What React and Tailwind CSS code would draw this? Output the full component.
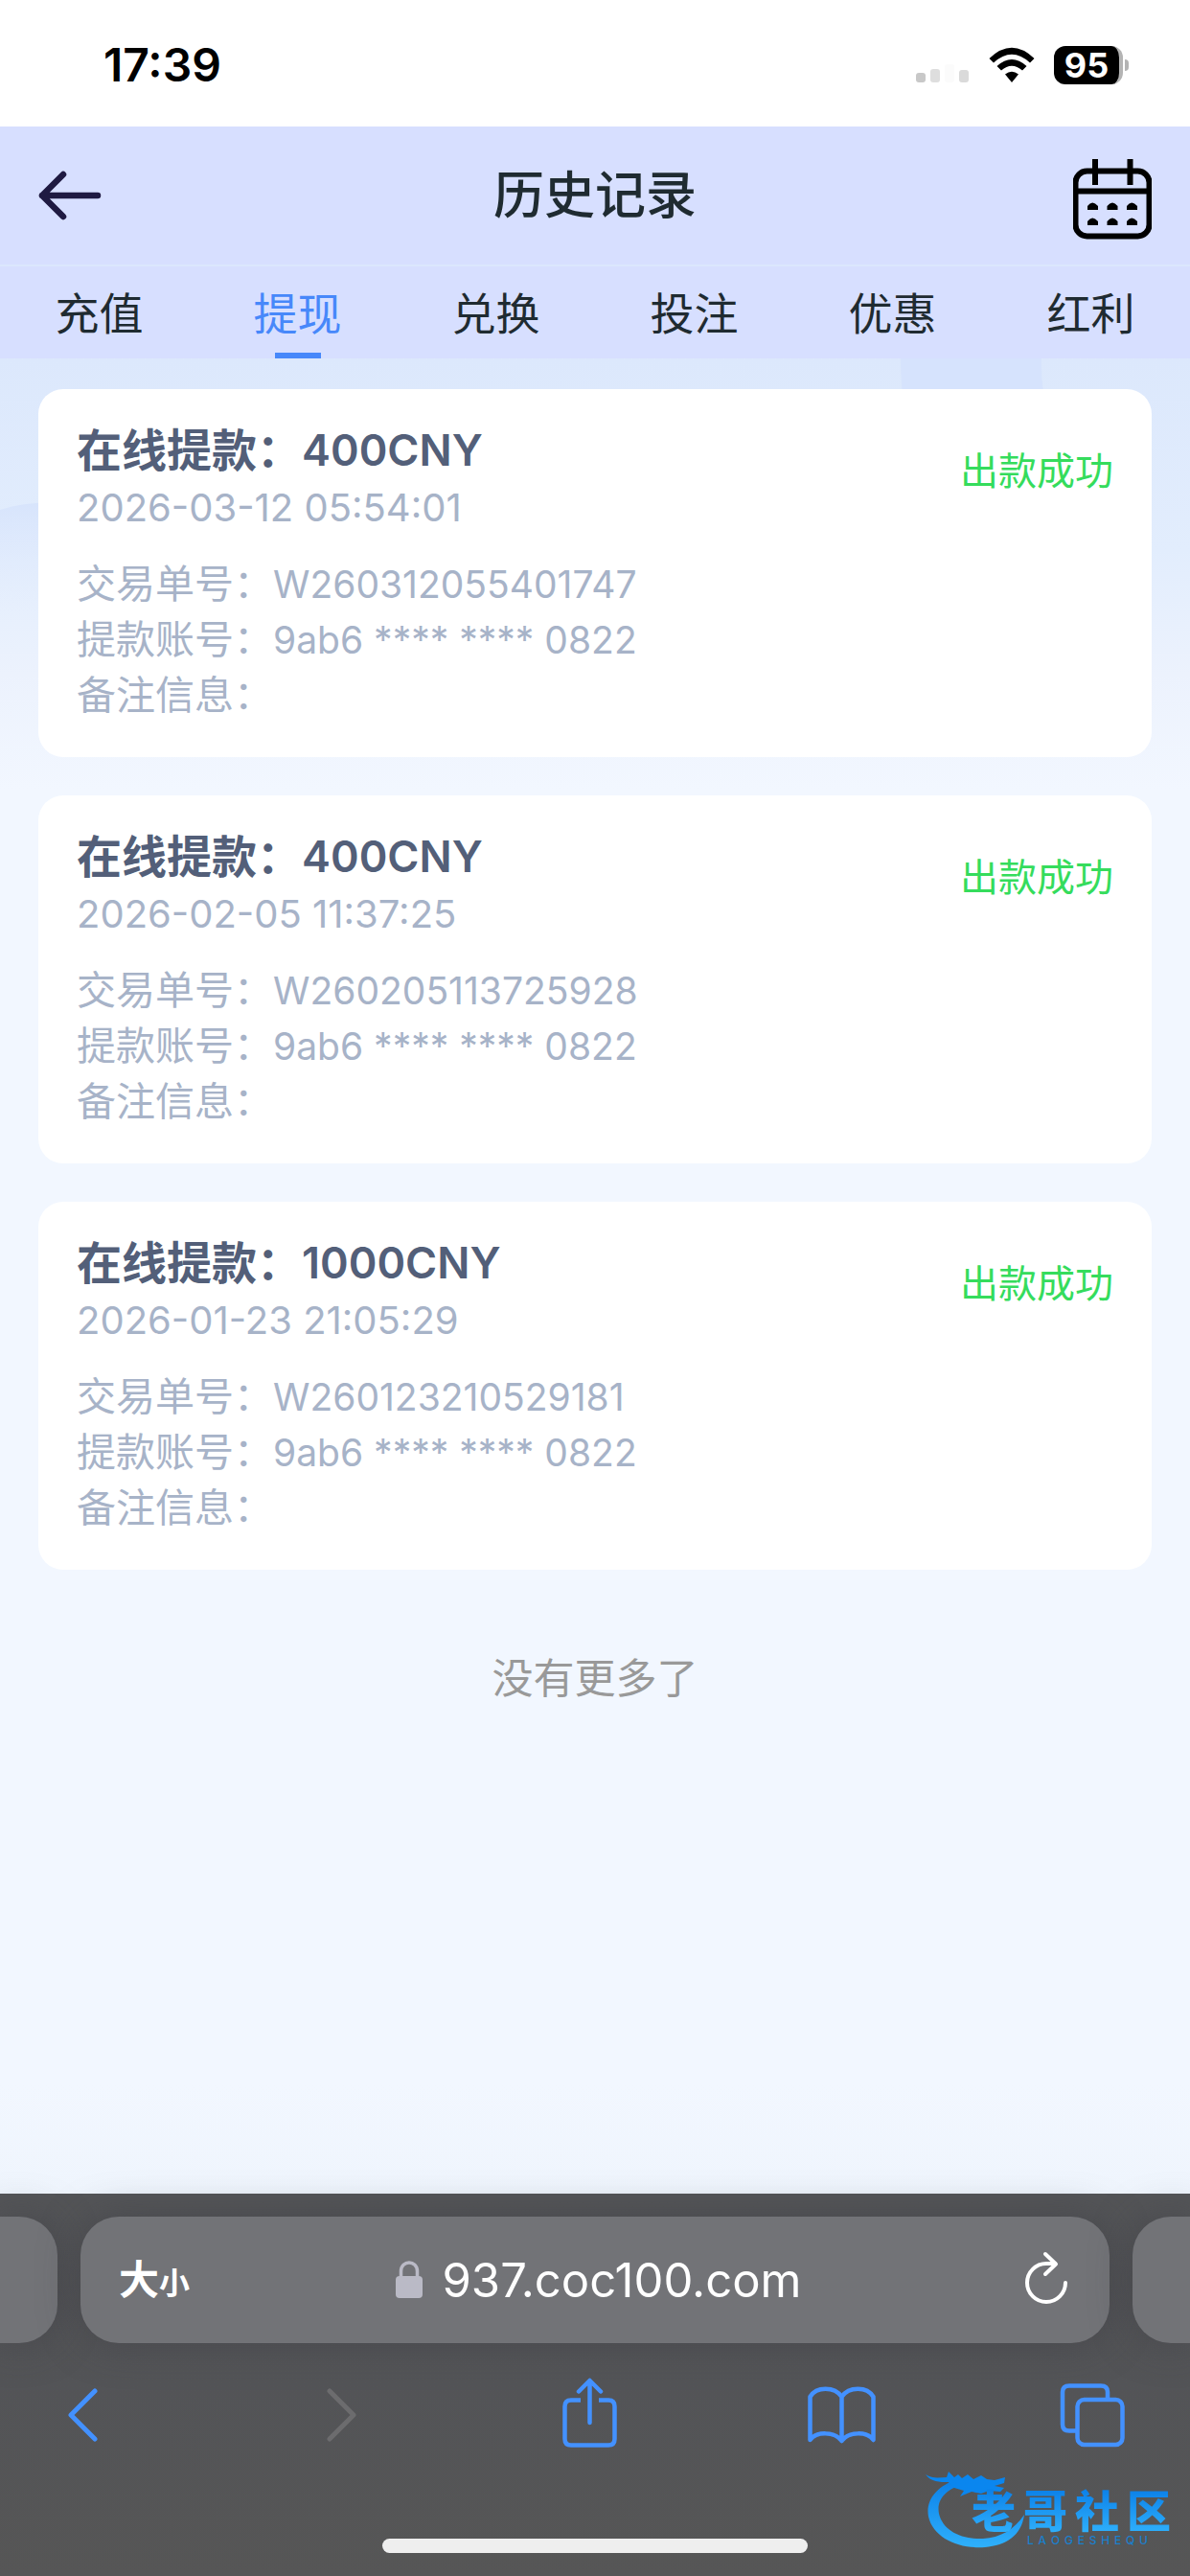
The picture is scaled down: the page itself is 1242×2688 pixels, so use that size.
import { useState } from "react";

const tabs = ["充值", "提现", "兑换", "投注", "优惠", "红利"];

const records = [
  {
    amount: "400CNY",
    time: "2026-03-12 05:54:01",
    order: "W260312055401747",
    account: "9ab6 **** **** 0822",
    remark: "",
    status: "出款成功",
  },
  {
    amount: "400CNY",
    time: "2026-02-05 11:37:25",
    order: "W260205113725928",
    account: "9ab6 **** **** 0822",
    remark: "",
    status: "出款成功",
  },
  {
    amount: "1000CNY",
    time: "2026-01-23 21:05:29",
    order: "W260123210529181",
    account: "9ab6 **** **** 0822",
    remark: "",
    status: "出款成功",
  },
];

function StatusBar() {
  return (
    <div className="flex h-33 items-center justify-between bg-white pr-16 pl-27 text-black">
      <span className="pt-1 text-[48px] leading-none font-semibold">17:39</span>
      <div className="flex items-center gap-5 pt-1">
        <svg width="56" height="40" viewBox="0 0 56 40">
          <rect x="0" y="28" width="10" height="10" rx="3" fill="#c8c8c8" />
          <rect x="15" y="24" width="10" height="14" rx="3" fill="#dedede" />
          <rect x="30" y="19" width="10" height="19" rx="3" fill="#fbfbfb" />
          <rect x="45" y="25" width="10" height="13" rx="3" fill="#dadada" />
        </svg>
        <svg width="48" height="40" viewBox="0 0 48 40">
          <path d="M0.5 13 Q24 -9.500 47.500 13 L43 17.500 Q24 0 5 17.500 Z" />
          <path d="M8.500 21 Q24 7 39.500 21 L35 25.500 Q24 16 13 25.500 Z" />
          <path d="M17 29.500 Q24 24 31 29.500 L24 38 Z" />
        </svg>
        <div className="flex items-center gap-0.5">
          <span className="flex h-10 w-18 items-center justify-center rounded-xl border-r-4 border-[#b4b4b4] bg-black text-[36px] leading-none font-bold text-white">
            95
          </span>
          <span className="h-3 w-1 rounded-r-full bg-[#b4b4b4]" />
        </div>
      </div>
    </div>
  );
}

function Header() {
  return (
    <header className="grid h-36 grid-cols-[82px_1fr_82px] items-center bg-[#d7dfff] px-10">
      <button type="button" aria-label="返回">
        <svg width="66" height="52" viewBox="0 0 66 52" fill="none">
          <path
            d="M26 4 L4 26 L26 48 M4 26 H62"
            stroke="#1f1a42"
            strokeWidth="6.500"
            strokeLinecap="round"
            strokeLinejoin="round"
          />
        </svg>
      </button>
      <h1 className="text-center text-[53px] leading-none font-medium text-[#1f2b31]">
        历史记录
      </h1>
      <button type="button" aria-label="日期" className="pt-2">
        <svg width="82" height="84" viewBox="0 0 82 84" fill="none">
          <rect x="2.500" y="12.500" width="77" height="68" rx="12" stroke="#000" strokeWidth="6" />
          <path d="M2 33.500 H80" stroke="#000" strokeWidth="6" />
          <path d="M23 0 V27 M59.500 0 V27" stroke="#000" strokeWidth="6" />
          <g fill="#000">
            <path d="M15 53 V49 Q20 42 26 49 V53 Z" />
            <path d="M35.500 53 V49 Q41 42 46.500 49 V53 Z" />
            <path d="M56 53 V49 Q61 42 67 49 V53 Z" />
            <path d="M15 69 V65 Q20 58 26 65 V69 Z" />
            <path d="M35.500 69 V65 Q41 58 46.500 65 V69 Z" />
            <path d="M56 69 V65 Q61 58 67 65 V69 Z" />
          </g>
        </svg>
      </button>
    </header>
  );
}

function Tabs({ active, onChange }) {
  return (
    <nav className="mt-0.5 grid h-24 grid-cols-6 bg-[#d7dfff]">
      {tabs.map((tab, i) => (
        <button
          key={tab}
          type="button"
          onClick={() => onChange(i)}
          className={
            i === active
              ? "flex flex-col items-center justify-between pt-[26px] text-[46px] leading-none text-[#4788fa]"
              : "flex flex-col items-center justify-between pt-[26px] text-[46px] leading-none text-[#1f2b31]"
          }
        >
          {tab}
          {i === active && <span className="h-1.5 w-12 bg-[#4788fa]" />}
        </button>
      ))}
    </nav>
  );
}

function Row({ label, value }) {
  return (
    <div className="flex h-[58px] items-center">
      <dt className="text-[41px]">{label}：</dt>
      <dd className="text-[39px]">{value}</dd>
    </div>
  );
}

function RecordCard({ record }) {
  return (
    <li className="flex items-start justify-between rounded-[26px] bg-white px-10 pt-8 pb-9">
      <div className="leading-none text-[#a7b3c8]">
        <h2 className="flex h-[62px] items-center text-[#535f79]">
          <span className="text-[47px] font-bold">在线提款：</span>
          <span className="text-[45px] font-semibold">{record.amount}</span>
        </h2>
        <p className="flex h-[60px] items-center text-[40px]">{record.time}</p>
        <dl className="mt-5">
          <Row label="交易单号" value={record.order} />
          <Row label="提款账号" value={record.account} />
          <Row label="备注信息" value={record.remark} />
        </dl>
      </div>
      <span className="pt-[34px] text-[40px] leading-none text-[#35dc5c]">{record.status}</span>
    </li>
  );
}

// soft shapes behind the list
function Backdrop() {
  return (
    <svg
      className="absolute inset-x-0 top-0 h-[560px] w-full"
      viewBox="0 0 1242 560"
      preserveAspectRatio="none"
    >
      <defs>
        <linearGradient id="wave" x1="0" y1="0" x2="0" y2="1">
          <stop offset="0" stopColor="#d7e4fc" />
          <stop offset="1" stopColor="#e6eefd" stopOpacity="0" />
        </linearGradient>
      </defs>
      <path d="M940 0 H1087 Q1086 30 1094 60 H945 Q940 30 940 0 Z" fill="#d6e3fd" />
      <path d="M0 158 Q24 150 60 150 V270 H0 Z" fill="url(#wave)" />
    </svg>
  );
}

function Watermark() {
  return (
    <div className="absolute right-5 bottom-7 h-[90px] w-[256px]">
      <svg width="256" height="90" viewBox="0 0 256 90" fill="none">
        <defs>
          <linearGradient id="dragon" x1="0" y1="0" x2="0" y2="1">
            <stop offset="0" stopColor="#0a7fe8" />
            <stop offset="1" stopColor="#2fb0fb" />
          </linearGradient>
        </defs>
        <path
          d="M36 16 C10 24 0 40 3 56 C8 78 34 90 62 88 C84 86 100 76 103 54 C92 70 78 78 60 79 C36 80 18 70 14 53 C11 38 22 26 42 22 Z"
          fill="url(#dragon)"
        />
        <path
          d="M0 12 C8 17 15 15 22 15 L24 9 L30 15 L34 12 L38 16 L44 12 L50 17 L58 13 L64 17 L72 18 L83 15 L82 21 L72 24 L82 26 L78 30 L66 29 L58 32 L48 30 L36 35 L40 29 L30 26 L24 20 C14 20 6 20 0 12 Z"
          fill="#0a86ef"
        />
      </svg>
      <div className="absolute top-[26px] right-0 flex w-[208px] justify-between bg-linear-to-b from-[#0a7fe8] to-[#2fb0fb] bg-clip-text text-[46px] leading-[48px] font-black text-transparent">
        <span>老</span>
        <span>哥</span>
        <span>社</span>
        <span>区</span>
      </div>
      <div className="absolute top-[75px] right-6 flex w-[126px] justify-between text-[12px] leading-none font-medium text-[#1c7fcb]">
        {[..."LAOGESHEQU"].map((c, i) => (
          <span key={i}>{c}</span>
        ))}
      </div>
    </div>
  );
}

function BrowserBar() {
  return (
    <footer className="relative bg-linear-to-b from-[#545558] via-[#535457] to-[#565656] pt-6 pb-6">
      <div className="flex gap-6">
        <div className="h-33 w-15 rounded-r-[40px] bg-[#727377] shadow-[0_0_40px_rgba(60,60,66,0.5)]" />
        <div className="flex h-33 flex-1 items-center justify-between rounded-[40px] bg-[#727377] pr-11 pl-10 text-white shadow-[0_0_40px_rgba(60,60,66,0.5)]">
          <button type="button" className="flex w-20 items-baseline font-bold">
            <span className="text-[42px] leading-none">大</span>
            <span className="text-[32px] leading-none">小</span>
          </button>
          <a href="#" className="flex items-center gap-5 text-[49px] leading-none">
            <svg width="28" height="40" viewBox="0 0 28 40" fill="none">
              <rect x="0" y="16" width="28" height="23" rx="4" fill="#babac6" />
              <path d="M5.500 18 V11 C5.500 -1 22.500 -1 22.500 11 V18" stroke="#babac6" strokeWidth="3.500" />
            </svg>
            937.coc100.com
          </a>
          <button type="button" aria-label="刷新" className="flex w-17 justify-end">
            <svg
              width="44"
              height="60"
              viewBox="0 0 44 60"
              fill="none"
              stroke="#fff"
              strokeWidth="4"
              strokeLinecap="round"
              strokeLinejoin="round"
            >
              <path d="M42 33 A20 20 0 1 1 22 13 H31" />
              <path d="M21 3 L32 13.500 L21 24" />
            </svg>
          </button>
        </div>
        <div className="h-33 w-15 rounded-l-[40px] bg-[#727377] shadow-[0_0_40px_rgba(60,60,66,0.5)]" />
      </div>

      <div className="mt-9 flex justify-between pr-[62px] pl-[46px] text-[#4391ff]">
        <button type="button" aria-label="后退">
          <svg width="80" height="80" viewBox="0 0 80 80" fill="none" stroke="currentColor" strokeWidth="5" strokeLinecap="round" strokeLinejoin="round">
            <path d="M53 14 L28 39 L53 64" />
          </svg>
        </button>
        <button type="button" aria-label="前进" className="text-[#6c6c6e]">
          <svg width="80" height="80" viewBox="0 0 80 80" fill="none" stroke="currentColor" strokeWidth="5" strokeLinecap="round" strokeLinejoin="round">
            <path d="M34 14 L59 39 L34 64" />
          </svg>
        </button>
        <button type="button" aria-label="分享">
          <svg width="80" height="80" viewBox="0 0 80 80" fill="none" stroke="currentColor" strokeWidth="4.500">
            <path d="M33 23.500 H23 Q16.500 23.500 16.500 30 V64 Q16.500 70.500 23 70.500 H62 Q68.500 70.500 68.500 64 V30 Q68.500 23.500 62 23.500 H52" />
            <path d="M42.500 47 V4 M31 14.500 L42.500 3 L54 14.500" strokeLinecap="round" strokeLinejoin="round" />
          </svg>
        </button>
        <button type="button" aria-label="书签">
          <svg width="80" height="80" viewBox="0 0 80 80" fill="none" stroke="currentColor" strokeWidth="4.500" strokeLinecap="round" strokeLinejoin="round">
            <path d="M41.500 20 C34 9 15 9 8.500 20 V65 C15 56 34 56 41.500 66 C49 56 68 56 74.500 65 V20 C68 9 49 9 41.500 20 V66" />
          </svg>
        </button>
        <button type="button" aria-label="标签页">
          <svg width="80" height="80" viewBox="0 0 80 80" fill="none" stroke="currentColor" strokeWidth="4.500">
            <rect x="24.500" y="23" width="47" height="47" rx="7" />
            <path d="M24 55.500 H16 Q9 55.500 9 49 V15 Q9 8.500 16 8.500 H49 Q56 8.500 56 15 V22" />
          </svg>
        </button>
      </div>

      <div className="mx-auto mt-[88px] h-[15px] w-[444px] rounded-full bg-[#eeeeee]" />
      <Watermark />
    </footer>
  );
}

function App() {
  const [active, setActive] = useState(1);

  return (
    <div className="flex min-h-screen flex-col bg-[#dbe7fd] font-['Inter','Noto_Sans_CJK_SC',sans-serif]">
      <StatusBar />
      <Header />
      <Tabs active={active} onChange={setActive} />
      <main className="relative flex-1 bg-[linear-gradient(#dce8fc_0px,#e2edfd_200px,#ecf2fd_330px,#f2f7ff_450px,#f2f7ff_94%,#eff5fd_100%)] px-10 pt-8">
        <Backdrop />
        <ul className="relative flex flex-col gap-10">
          {records.map((record) => (
            <RecordCard key={record.order} record={record} />
          ))}
        </ul>
        <p className="relative pt-23 text-center text-[43px] leading-none text-[#999999]">
          没有更多了
        </p>
      </main>
      <BrowserBar />
    </div>
  );
}

export default App;
